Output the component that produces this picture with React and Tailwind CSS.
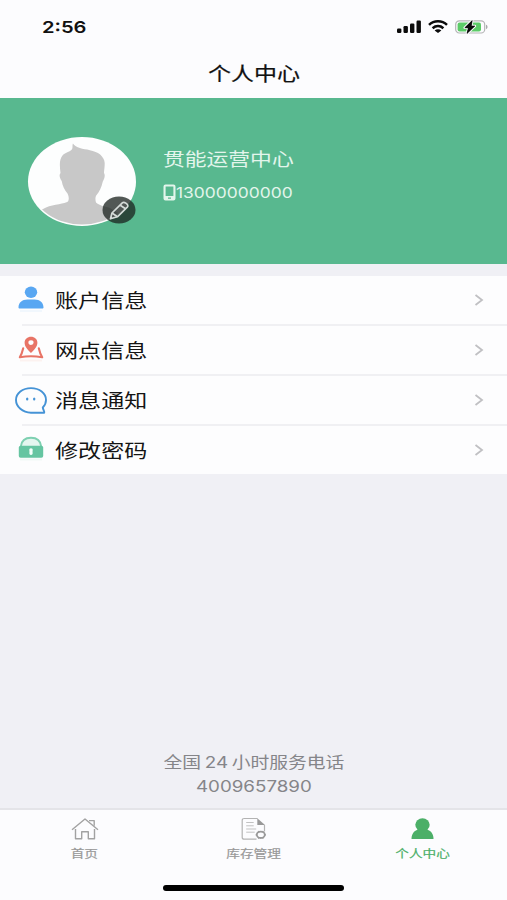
import React from 'react';

function SignalIcon() {
  return (
    <svg width="24" height="13" viewBox="0 0 24 13" fill="#0b0b0b">
      <rect x="0" y="8.5" width="4.4" height="4.5" rx="1.2" />
      <rect x="6.5" y="6" width="4.4" height="7" rx="1.2" />
      <rect x="13" y="3.5" width="4.4" height="9.5" rx="1.2" />
      <rect x="19.5" y="0.5" width="4.4" height="12.5" rx="1.2" />
    </svg>
  );
}

function WifiIcon() {
  return (
    <svg width="20" height="13" viewBox="0 0 20 13" fill="none" stroke="#0b0b0b" strokeWidth="2.5">
      <path d="M1 4.8C6 .2 14 .2 19 4.8" />
      <path d="M4.6 8.2C7.8 5.4 12.2 5.4 15.4 8.2" />
      <path d="M10 13 6.6 10.4C8.6 8.9 11.4 8.9 13.4 10.4Z" fill="#0b0b0b" stroke="none" />
    </svg>
  );
}

function BatteryIcon() {
  return (
    <svg width="34" height="14" viewBox="0 0 34 14" fill="none">
      <rect x="0.7" y="0.8" width="29" height="12.2" rx="3.6" stroke="#b4b4b6" strokeWidth="1.2" />
      <rect x="2.6" y="2.4" width="23.4" height="9" rx="2" fill="#5ccb68" />
      <path d="M31 4.8c2 .6 2 3.8 0 4.4Z" fill="#a9a9ab" />
      <path d="M17.200.6 9.800 7.800h3.600L12 13.400 19.800 6h-3.600Z" fill="#0b0b0b" stroke="#fcfcfe" strokeWidth="2.6" strokeLinejoin="round" paintOrder="stroke" />
      <path d="M17.200.6 9.800 7.800h3.600L12 13.400 19.800 6h-3.600Z" fill="#0b0b0b" stroke="#0b0b0b" strokeWidth="0.6" />
    </svg>
  );
}

function Avatar() {
  return (
    <svg width="110" height="92" viewBox="0 0 110 92">
      <defs>
        <clipPath id="face">
          <ellipse cx="55" cy="46.5" rx="52.5" ry="43" />
        </clipPath>
      </defs>
      <ellipse cx="55" cy="46.5" rx="54" ry="44.5" fill="#fdfefe" />
      <path
        clipPath="url(#face)"
        fill="#c8c8c8"
        d="M33.500 38c-.8-7-1.500-13 2-17.500 3-3.500 8-3.500 9.600-6.500.8-1.600 0-3.200.8-5.400 3 4.800 10 5.200 17 6.600 8 1.400 14.500 6 14.800 12.800.1 4-.6 7-.7 10 1.500 2 .5 5.500-1.200 8.500-1.400 6-3.200 10-6.600 14-1.200 2-.8 5-.2 7 3 3 8 3.500 14 5.500l8 5V92H12V76l7-3.500c8-3.500 19-3.500 22-6 1.200-2.500 1-5-.5-8-3-3.500-5-7.500-5.800-12.500-1.800-2.500-3-6-1.200-8Z"
      />
    </svg>
  );
}

function EditBadge() {
  return (
    <svg width="34" height="28" viewBox="0 0 34 28" fill="none">
      <ellipse cx="17" cy="14" rx="16.5" ry="13.5" fill="#1b2320" fillOpacity="0.76" />
      <g stroke="#d5dbd8" strokeWidth="1.7" strokeLinejoin="round">
        <path d="M8.500 22.800 10 17 20.300 6.800c1.700-1.600 7 1.800 5.200 4L15.400 20.800Z" />
        <path d="m10 17 5.400 3.800M18.200 9.200l5.300 3.600" />
      </g>
    </svg>
  );
}

function PhoneIcon() {
  return (
    <svg width="13" height="17" viewBox="0 0 13 17">
      <path fillRule="evenodd" fill="#e3f5ec" d="M2.500.5h8A2 2 0 0 1 12.500 2.500v12a2 2 0 0 1-2 2h-8a2 2 0 0 1-2-2v-12a2 2 0 0 1 2-2ZM2.600 2.500v9.500h7.800V2.500ZM5 13.400v1.400h3v-1.400Z" />
    </svg>
  );
}

function AccountIcon() {
  return (
    <svg width="32" height="30" viewBox="0 0 32 30">
      <ellipse cx="16" cy="7.3" rx="6.2" ry="5.7" fill="#59a7f2" />
      <path d="M3.500 22.500c0-5 3.500-8 9-8h7c5.500 0 9 3 9 8 0 .8-.5 1-1.200 1H4.700c-.7 0-1.200-.2-1.200-1Z" fill="#59a7f2" />
      <path d="M5 26h22" stroke="#f1f7fd" strokeWidth="2" />
    </svg>
  );
}

function BranchIcon() {
  return (
    <svg width="32" height="30" viewBox="0 0 32 30" fill="none">
      <path d="M8.200 13.300C7.500 16.500 6.500 19.500 4.800 22.300 12 20.900 20 20.900 27.200 22.300 25.500 19.500 24.500 16.500 23.800 13.300" stroke="#e87466" strokeWidth="2.1" strokeLinejoin="round" strokeLinecap="round" />
      <path fillRule="evenodd" d="M16 18c-3.500-3.600-6.400-6.600-6.400-10.300C9.600 4.100 12.400 1.700 16 1.700s6.400 2.400 6.400 6c0 3.700-2.900 6.700-6.400 10.300ZM16 5.300a2.600 2.300 0 1 0 0 4.600 2.600 2.300 0 0 0 0-4.600Z" fill="#e87466" />
      <path d="M5 25.500h22" stroke="#fcf2f0" strokeWidth="2" />
    </svg>
  );
}

function MessageIcon() {
  return (
    <svg width="32" height="30" viewBox="0 0 32 30" fill="none">
      <path d="M27.800 22.500C30 20.200 31 17.600 31 14.900 31 8.200 24.500 3.100 16 3.100S1 8.200 1 14.900s6.500 12.800 15 12.800h13.200c.5-1.500-1-2.600-1.400-5.200Z" stroke="#4593d6" strokeWidth="1.9" strokeLinejoin="round" />
      <ellipse cx="12.2" cy="14" rx="1.2" ry="1.5" fill="#4593d6" />
      <ellipse cx="19.2" cy="14" rx="1.2" ry="1.5" fill="#4593d6" />
    </svg>
  );
}

function LockIcon() {
  return (
    <svg width="32" height="30" viewBox="0 0 32 30" fill="none">
      <path d="M5.800 11.500C6.500 5.500 10 2.800 16 2.800s9.500 2.700 10.200 8.700" fill="#e4f6ef" stroke="#7ed0b1" strokeWidth="1.9" />
      <rect x="3.8" y="10.8" width="24.4" height="12" rx="1.8" fill="#65c5a1" />
      <circle cx="16" cy="15" r="1.8" fill="#f4fffa" />
      <rect x="14.4" y="15.4" width="3.2" height="4.6" rx="1.4" fill="#f4fffa" />
      <path d="M5 24.500h22" stroke="#f0f9f6" strokeWidth="2" />
    </svg>
  );
}

function HomeIcon() {
  return (
    <svg width="28" height="24" viewBox="0 0 28 24" fill="none" stroke="#a2a2a2" strokeWidth="1.4" strokeLinejoin="round">
      <path d="M1 12.800 14 2l13 10.800" />
      <path d="M4.500 12v9.800h6.200v-7h6.600v7h6.200V12" />
      <path d="M18 3.600h5.200v5.200" />
    </svg>
  );
}

function StockIcon() {
  return (
    <svg width="28" height="24" viewBox="0 0 28 24" fill="none" stroke="#b3b3b3">
      <path d="M17.500 1.500H4.200C3 1.500 2.200 2.200 2.200 3.200v17.200c0 1 .8 1.700 2 1.700h12.300M24.500 8v6.500" strokeWidth="1.2" />
      <path d="M17.300 1.300 25 8h-7.700Z" fill="#999" stroke="none" />
      <path d="M6.200 5.500h7.500M6.200 8.800h7.500M6.200 12h10M6.200 15.200h8.500" strokeWidth="1" stroke="#c2c2c2" />
      <ellipse cx="20.8" cy="17.8" rx="4" ry="3.2" strokeWidth="1.8" stroke="#999" />
      <path d="M15.600 17.800h1.400M24.600 17.800h1.400M18.300 14l.7 1M23.300 14l-.7 1M18.300 21.600l.7-1M23.300 21.600l-.7-1" strokeWidth="1.3" stroke="#999" />
    </svg>
  );
}

function PersonIcon() {
  return (
    <svg width="28" height="24" viewBox="0 0 28 24" fill="#4caf68">
      <ellipse cx="13.5" cy="7.8" rx="7.2" ry="6.6" />
      <path d="M2.500 22c0-6 3.500-9.200 8-9.700h6c4.500.5 8 3.700 8 9.700Z" />
    </svg>
  );
}

const menu = [
  { label: '账户信息', Icon: AccountIcon },
  { label: '网点信息', Icon: BranchIcon },
  { label: '消息通知', Icon: MessageIcon },
  { label: '修改密码', Icon: LockIcon },
];

const tabs = [
  { label: '首页', Icon: HomeIcon },
  { label: '库存管理', Icon: StockIcon },
  { label: '个人中心', Icon: PersonIcon, active: true },
];

function App() {
  return (
    <div className="flex h-[900px] w-[507px] flex-col overflow-hidden bg-[#f0f0f5] font-[Inter,'Noto_Sans_CJK_SC',sans-serif]">
      <header className="h-[98px] bg-[#fcfcfe] text-[#111]">
        <div className="flex h-[53px] items-center justify-between pr-[18px] pl-[42px]">
          <span className="origin-left scale-x-[1.22] pt-px text-[16.5px] font-semibold">2:56</span>
          <div className="flex items-center gap-[7px]">
            <SignalIcon />
            <WifiIcon />
            <BatteryIcon />
          </div>
        </div>
        <h1 className="flex h-[45px] items-center justify-center pl-[2px] text-[19px] [-webkit-text-stroke:0.2px]">
          <span className="scale-x-[1.21]">个人中心</span>
        </h1>
      </header>

      <section className="flex h-[166px] bg-[#58b88f] pt-[37px] pl-[27px] text-[#e3f5ec]">
        <div className="relative h-[92px] w-[110px]">
          <Avatar />
          <div className="absolute top-[61px] left-[75px]">
            <EditBadge />
          </div>
        </div>
        <div className="pt-[11px] pl-[26px]">
          <p className="w-fit origin-left scale-x-[1.21] text-[18px] leading-[28px] whitespace-nowrap">贯能运营中心</p>
          <div className="mt-[8px] flex items-center">
            <PhoneIcon />
            <span className="origin-left scale-x-[1.16] pt-px text-[15px] leading-[20px]">13000000000</span>
          </div>
        </div>
      </section>

      <ul className="mt-[12px] bg-[#fdfdfe]">
        {menu.map(({ label, Icon }, i) => (
          <li key={label}>
            <div className="flex h-[48px] items-center pl-[15px]">
              <Icon />
              <div className="ml-[8px] flex h-full flex-1 items-center justify-between pr-[23px]">
                <span className="origin-left scale-x-[1.215] pt-[4px] text-[19px] text-[#151515]">{label}</span>
                <svg width="10" height="12" viewBox="0 0 10 12" fill="none" stroke="#c0c0c3" strokeWidth="1.8">
                  <path d="m1.500 1 6.500 5-6.500 5" />
                </svg>
              </div>
            </div>
            {i < menu.length - 1 && <div className="ml-[22px] h-[2px] bg-[#f0f0f3]" />}
          </li>
        ))}
      </ul>

      <div className="mt-auto flex flex-col items-center pb-[10px] text-[#858589]">
        <p className="flex scale-x-[1.19] items-center gap-[3px] text-[15.8px] leading-[24px]">
          全国<span>24</span>小时服务电话
        </p>
        <p className="scale-x-[1.21] text-[15.5px] leading-[23px]">4009657890</p>
      </div>

      <nav className="h-[92px] border-t-2 border-[#e4e4e8] bg-[#fcfcfe]">
        <div className="grid h-[75px] grid-cols-3">
          {tabs.map(({ label, Icon, active }) => (
            <div key={label} className={`flex flex-col items-center pt-[7px] ${active ? 'text-[#4caf68]' : 'text-[#999]'}`}>
              <Icon />
              <span className="mt-[5px] scale-x-[1.21] text-[11.3px] leading-[16px] [-webkit-text-stroke:0.2px]">{label}</span>
            </div>
          ))}
        </div>
        <div className="mx-auto h-[6px] w-[181px] rounded-full bg-black" />
      </nav>
    </div>
  );
}

export default App;
